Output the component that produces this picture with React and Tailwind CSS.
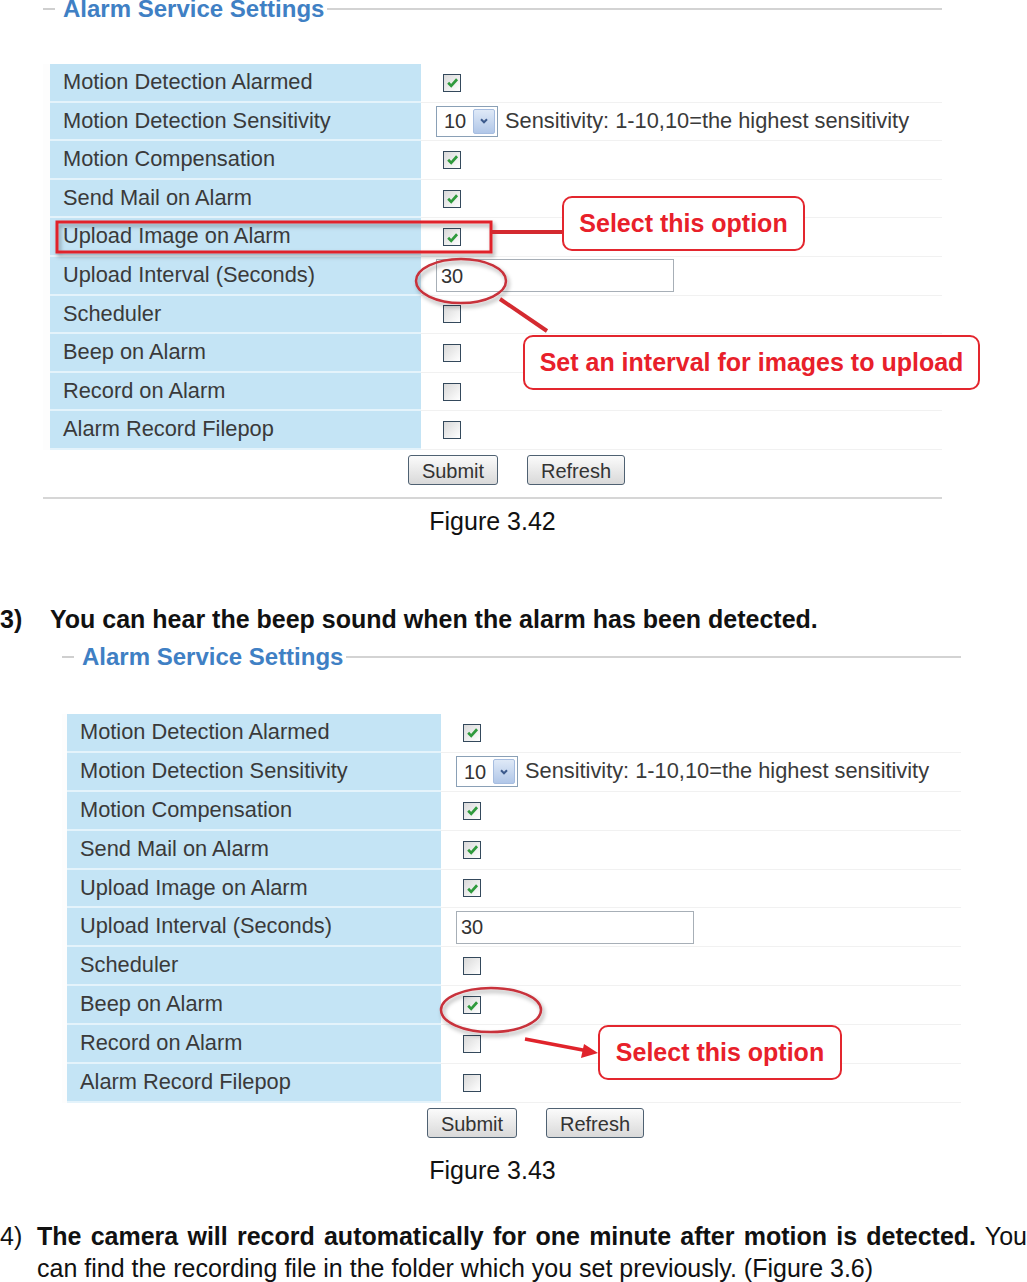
const LABELS = [
  "Motion Detection Alarmed",
  "Motion Detection Sensitivity",
  "Motion Compensation",
  "Send Mail on Alarm",
  "Upload Image on Alarm",
  "Upload Interval (Seconds)",
  "Scheduler",
  "Beep on Alarm",
  "Record on Alarm",
  "Alarm Record Filepop",
];

function Check({ on }) {
  return (
    <span className="ml-[7px] flex h-[18px] w-[18px] items-center justify-center border border-[#34495c] bg-linear-to-br from-[#d9d9d9] to-white">
      {on && (
        <svg viewBox="0 0 12 12" className="h-[13px] w-[13px]">
          <path d="M2 6.3l2.8 2.8L10.2 3" fill="none" stroke="#2f9a3c" strokeWidth="2.5" />
        </svg>
      )}
    </span>
  );
}

function Select() {
  return (
    <span className="flex h-[31px] w-[62px] items-center border border-[#8aa0b6] bg-white pl-[7px] pr-[2px]">
      <span className="flex-1 text-[20px] text-[#333]">10</span>
      <span className="flex h-[25px] w-[22px] items-center justify-center rounded-[2px] border border-[#a6bde0] bg-linear-to-b from-[#dfe9f7] to-[#b1c7e8]">
        <svg viewBox="0 0 10 10" className="h-[10px] w-[10px]">
          <path d="M2 3.3l3 3 3-3" fill="none" stroke="#3c5a8c" strokeWidth="2" />
        </svg>
      </span>
    </span>
  );
}

function Control({ i, beep }) {
  if (i === 1)
    return (
      <>
        <Select />
        <span className="ml-[7px] text-[21.8px] text-[#3a3a3a]">
          Sensitivity: 1-10,10=the highest sensitivity
        </span>
      </>
    );
  if (i === 5)
    return (
      <span className="flex h-[33px] w-[238px] items-center border border-[#a7afb7] bg-white pl-[4px] text-[20px] text-[#333]">
        30
      </span>
    );
  const on = i === 0 || i === 2 || i === 3 || i === 4 || (i === 7 && beep);
  return <Check on={on} />;
}

function Panel({ beep, rowH, labelW, left, gap }) {
  return (
    <div className={left + " w-[899px]"}>
      <div className="flex h-[18px] items-center">
        <div className="h-[2px] w-[12px] bg-[#cfcfcf]" />
        <span className="ml-[8px] text-[24px] font-bold leading-[18px] text-[#3f80c4]">
          Alarm Service Settings
        </span>
        <div className="ml-[3px] h-[2px] flex-1 bg-[#d3d3d3]" />
      </div>
      <div className={gap + " bg-[#fdfdfd]"}>
        {LABELS.map((label, i) => (
          <div key={label} className={"flex " + rowH}>
            <div
              className={
                labelW +
                " flex items-center border-b-2 border-[#e4f3fb] bg-[#c4e4f5] pl-[13px] text-[21.8px] text-[#3a3a3a]"
              }
            >
              {label}
            </div>
            <div className="flex flex-1 items-center border-b border-[#f1f1f1] bg-white pl-[15px]">
              <Control i={i} beep={beep} />
            </div>
          </div>
        ))}
      </div>
      <div className="mt-[5px] flex h-[30px] items-center gap-[29px] pl-[365px]">
        <button className="h-[30px] w-[90px] rounded-[3px] border-[1.5px] border-[#4f6172] bg-linear-to-b from-[#fbfbfb] to-[#d9d9d9] text-[20px] text-[#333]">
          Submit
        </button>
        <button className="h-[30px] w-[98px] rounded-[3px] border-[1.5px] border-[#4f6172] bg-linear-to-b from-[#fbfbfb] to-[#d9d9d9] text-[20px] text-[#333]">
          Refresh
        </button>
      </div>
    </div>
  );
}

function Callout({ className, children }) {
  return (
    <div
      className={
        "absolute flex h-[55px] items-center justify-center rounded-[10px] border-2 border-[#e3262e] bg-white text-[25px] font-bold text-[#e8202a] " +
        className
      }
    >
      {children}
    </div>
  );
}

export default function App() {
  return (
    <div className="relative h-[1282px] w-[1027px] overflow-hidden bg-white font-['Liberation_Sans',Arial,sans-serif] text-black">
      <Panel beep={false} rowH="h-[38.6px]" labelW="ml-[7px] w-[371px]" left="ml-[43px]" gap="mt-[46px]" />
      <div className="ml-[43px] mt-[12px] h-[2px] w-[899px] bg-[#d6d6d6]" />
      <div className="ml-[43px] mt-[7px] w-[899px] text-center text-[25px] leading-[30px] text-[#111]">
        Figure 3.42
      </div>

      <div className="mt-[68px] flex text-[25px] font-bold leading-[30px] text-[#111]">
        <span className="w-[50px] shrink-0">3)</span>
        <span>You can hear the beep sound when the alarm has been detected.</span>
      </div>

      <div className="mt-[14px]">
        <Panel beep={true} rowH="h-[38.9px]" labelW="ml-[5px] w-[374px]" left="ml-[62px]" gap="mt-[48px]" />
      </div>
      <div className="ml-[43px] mt-[17px] w-[899px] text-center text-[25px] leading-[30px] text-[#111]">
        Figure 3.43
      </div>

      <div className="mt-[35px] flex font-['Liberation_Sans_Narrow','Liberation_Sans',sans-serif] text-[25px] leading-[32px] text-[#111]">
        <span className="w-[37px] shrink-0">4)</span>
        <p className="flex-1 text-justify">
          <b>The camera will record automatically for one minute after motion is detected.</b> You
          can find the recording file in the folder which you set previously. (Figure 3.6)
        </p>
      </div>

      <svg
        className="pointer-events-none absolute left-0 top-0"
        width="1027"
        height="1282"
        viewBox="0 0 1027 1282"
      >
        <defs>
          <filter id="sh" x="-20%" y="-40%" width="140%" height="180%">
            <feDropShadow dx="2" dy="3" stdDeviation="2" floodColor="#000" floodOpacity="0.35" />
          </filter>
        </defs>
        <rect x="57" y="222" width="434" height="30" fill="none" stroke="#e0232b" strokeWidth="3" filter="url(#sh)" />
        <line x1="491" y1="232" x2="563" y2="232" stroke="#d42a30" strokeWidth="4" />
        <ellipse cx="461" cy="281" rx="45" ry="22" fill="none" stroke="#c8303a" strokeWidth="2.5" filter="url(#sh)" />
        <line x1="500" y1="299" x2="547" y2="331" stroke="#d42a30" strokeWidth="4" />

        <ellipse cx="491" cy="1010" rx="50" ry="22" fill="none" stroke="#c8303a" strokeWidth="2.5" filter="url(#sh)" />
        <line x1="525" y1="1039" x2="588" y2="1051" stroke="#e0232b" strokeWidth="3.5" />
        <path d="M598 1053 L584 1044 L581 1058 Z" fill="#e0232b" />
      </svg>

      <Callout className="left-[562px] top-[196px] w-[243px]">Select this option</Callout>
      <Callout className="left-[523px] top-[335px] w-[457px]">Set an interval for images to upload</Callout>
      <Callout className="left-[598px] top-[1025px] w-[244px]">Select this option</Callout>
    </div>
  );
}
